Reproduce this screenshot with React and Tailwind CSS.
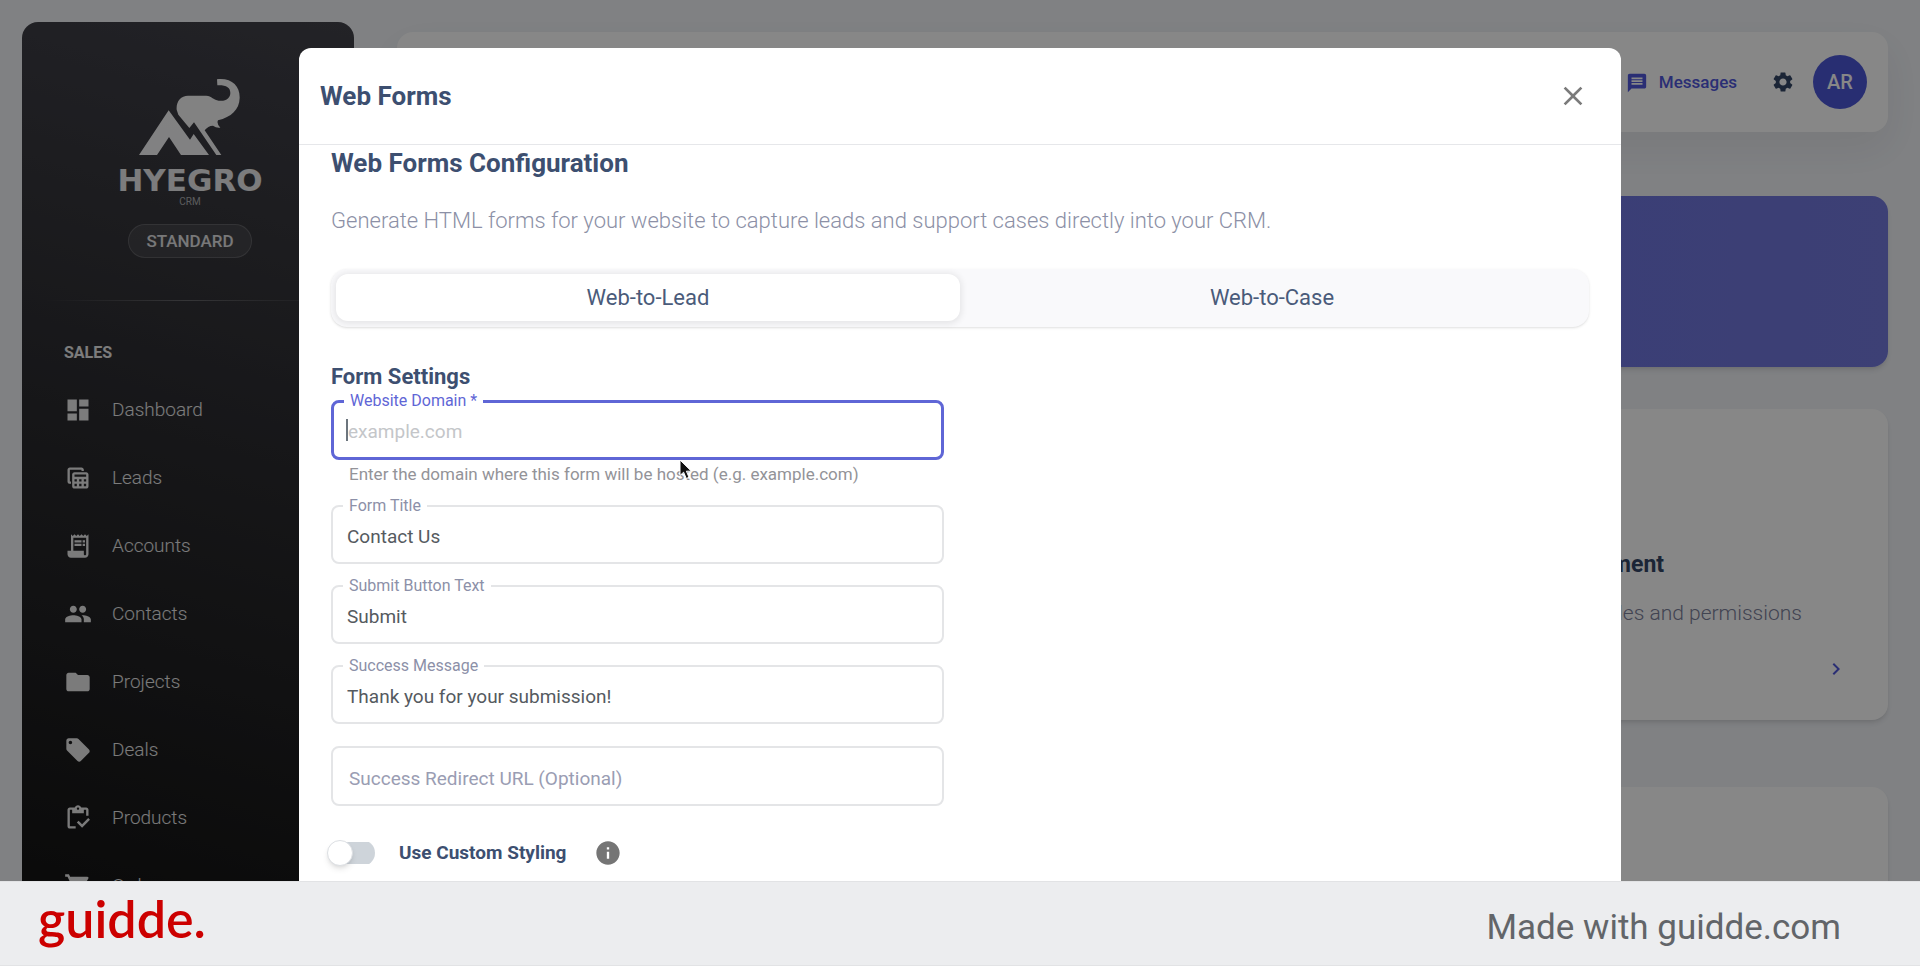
import { useState } from "react";
import {
  MdChevronRight,
  MdClose,
  MdDashboard,
  MdFolder,
  MdInfo,
  MdLocalOffer,
  MdMessage,
  MdPeople,
  MdReceiptLong,
  MdSettings,
  MdShoppingCart,
  MdTableView,
} from "react-icons/md";

const NAV = [
  { label: "Dashboard", icon: MdDashboard },
  { label: "Leads", icon: MdTableView },
  { label: "Accounts", icon: MdReceiptLong },
  { label: "Contacts", icon: MdPeople },
  { label: "Projects", icon: MdFolder },
  { label: "Deals", icon: MdLocalOffer },
  { label: "Products", icon: ClipboardCheck },
  { label: "Orders", icon: MdShoppingCart },
];

export default function App() {
  return (
    <div className="flex h-screen flex-col overflow-hidden font-['Roboto',sans-serif]">
      <div className="relative min-h-0 flex-1 overflow-hidden bg-[#f2f4f8]">
        <div className="flex h-full">
          <Sidebar />
          <Page />
        </div>
        <div className="absolute inset-0 flex justify-center bg-black/47 px-6 pt-12">
          <WebFormsDialog />
        </div>
      </div>
      <footer className="flex h-[85px] shrink-0 items-center justify-between border-y border-[#e2e3e5] bg-[#ecedef] pr-[79px] pl-[38px]">
        <a href="#guidde" className="pb-3 font-['Lato',sans-serif] text-[52px] leading-none font-semibold text-[#cc0000]">
          guidde.
        </a>
        <p className="pt-2 text-[35px] leading-10 text-[#626569]">Made with guidde.com</p>
      </footer>
    </div>
  );
}

function Sidebar() {
  return (
    <aside className="mt-[22px] ml-[22px] w-[332px] shrink-0 overflow-hidden rounded-t-2xl bg-linear-195 from-[#42424a] to-[#151515]">
      <div className="flex flex-col items-center pt-14 pl-1 text-white">
        <Logo />
        <div className="mt-2 font-['DejaVu_Sans',sans-serif] text-[31px] leading-8 font-bold text-white/90">HYEGRO</div>
        <div className="text-[10px] leading-3 text-white/60">CRM</div>
        <span className="mt-4 rounded-full border border-white/15 bg-white/8 px-[17px] py-1 text-[17px] leading-6 font-medium text-white/85">
          STANDARD
        </span>
      </div>
      <div className="mx-6 mt-[42px] h-px bg-linear-to-r from-transparent via-white/25 to-transparent" />
      <nav className="mt-10 px-[42px]">
        <h2 className="text-base leading-6 font-bold text-white/90">SALES</h2>
        <ul className="mt-[11px]">
          {NAV.map(({ label, icon: Icon }) => (
            <li key={label}>
              <a href={`#${label.toLowerCase()}`} className="flex h-[68px] items-center gap-5 text-[19px] font-light text-white/90">
                <Icon className="size-7" />
                {label}
              </a>
            </li>
          ))}
        </ul>
      </nav>
    </aside>
  );
}

function Logo() {
  return (
    <svg viewBox="420 235 312 234" className="h-[78px] w-[104px] opacity-95" fill="currentColor" aria-hidden="true">
      <path d="M423 466 512 332 576 420 587 403 633 466H549L513 412 477 466Z" />
      <path d="M536 330C534 305 548 289 570 288H625C640 289 648 301 662 303 685 306 697 294 697 280 697 264 685 256 658 257L657 239C700 234 726 258 725 295 724 330 700 352 660 362Q655 372 667 384 655 386 645 378 630 378 620 392L670 466H655L588 368 574 385 541 345Z" />
    </svg>
  );
}

function ClipboardCheck({ className }) {
  return (
    <svg viewBox="0 0 24 24" className={className} fill="currentColor" aria-hidden="true">
      <path d="M5 5h2v3h10V5h2v5h2V5c0-1.100-.900-2-2-2h-4.180C14.400 1.840 13.300 1 12 1s-2.400.840-2.820 2H5c-1.100 0-2 .900-2 2v14c0 1.100.900 2 2 2h5v-2H5V5zm7-2c.550 0 1 .450 1 1s-.450 1-1 1-1-.450-1-1 .450-1 1-1z" />
      <path d="M20.750 12 15.500 17.250 12.500 14.250 11 15.750l4.500 4.500 6.750-6.750z" />
    </svg>
  );
}

function Page() {
  return (
    <main className="ml-[43px] min-w-0 flex-1 pt-8 pr-8">
      <header className="flex h-[100px] items-center justify-end rounded-2xl bg-white pr-[21px] shadow-[0_16px_40px_4px_rgba(0,0,0,0.06)]">
        <button type="button" className="mt-0.5 flex items-center gap-[11px] text-[17px] font-medium text-[#5058dc]">
          <MdMessage className="size-[22px]" />
          Messages
        </button>
        <button type="button" aria-label="Settings" className="ml-[34px] text-[#344767]">
          <MdSettings className="size-6" />
        </button>
        <div className="ml-[18px] flex size-[54px] items-center justify-center rounded-full bg-[#4d58d8] text-xl font-medium text-white">
          AR
        </div>
      </header>
      <div className="mt-16 h-[171px] rounded-2xl bg-linear-to-r from-[#6068e8] to-[#7379dd] shadow-md" />
      <div className="mt-[42px] grid grid-cols-3 gap-x-[59px] gap-y-[67px]">
        <Card />
        <Card />
        <Card title="User Management" text="Manage user roles and permissions" />
        <Card />
        <Card />
        <Card />
      </div>
    </main>
  );
}

function Card({ title, text }) {
  return (
    <section className="flex h-[311px] flex-col rounded-2xl bg-white px-10 pt-[140px] shadow-md">
      {title && (
        <div className="flex flex-col pl-1">
          <h3 className="text-[23px] leading-8 font-bold whitespace-nowrap text-[#344767]">{title}</h3>
          <p className="mt-4 text-[21px] leading-8 font-light whitespace-nowrap text-[#7b809a]">{text}</p>
          <MdChevronRight className="mt-7 size-6 self-end text-[#5058dc]" />
        </div>
      )}
    </section>
  );
}

function WebFormsDialog() {
  const [tab, setTab] = useState("Web-to-Lead");
  return (
    <section role="dialog" aria-label="Web Forms" className="relative w-full max-w-[1322px] overflow-hidden rounded-t-xl bg-white text-[#3d4f70]">
      <header className="flex h-[97px] items-center justify-between border-b border-[#e6e7ea] pr-[32px] pl-[21px]">
        <h1 className="text-[26px] font-bold">Web Forms</h1>
        <button type="button" aria-label="Close" className="text-[#7b7b7b]">
          <MdClose className="size-8" />
        </button>
      </header>
      <div className="px-8">
        <h2 className="text-[26px] leading-9 font-bold">Web Forms Configuration</h2>
        <p className="mt-6 text-[22px] leading-8 font-light text-[#8c90a6]">
          Generate HTML forms for your website to capture leads and support cases directly into your CRM.
        </p>
        <div role="tablist" className="mt-8 grid h-[58px] grid-cols-2 rounded-2xl bg-[#f9f9fb] p-[5px] pb-[6px] shadow-sm">
          {["Web-to-Lead", "Web-to-Case"].map((name) => (
            <button
              key={name}
              type="button"
              role="tab"
              aria-selected={tab === name}
              onClick={() => setTab(name)}
              className={`rounded-xl text-[22px] text-[#4a5b7a] ${tab === name ? "bg-white shadow-[0_1px_6px_2px_rgba(0,0,0,0.08)]" : ""}`}
            >
              {name}
            </button>
          ))}
        </div>
        <h3 className="mt-[36px] text-[22px] leading-7 font-bold">Form Settings</h3>
        <form className="grid grid-cols-2 gap-[32px]">
          <div className="flex flex-col">
            <Field id="domain" label="Website Domain *" placeholder="example.com" focused />
            <p className="mt-0.5 mb-2.5 pl-[18px] text-[17px] leading-6 whitespace-nowrap text-[#939398]">
              Enter the domain where this form will be hosted (e.g. example.com)
            </p>
            <div className="flex flex-col gap-3">
              <Field id="title" label="Form Title" value="Contact Us" />
              <Field id="button" label="Submit Button Text" value="Submit" />
              <Field id="message" label="Success Message" value="Thank you for your submission!" />
            </div>
            <input
              aria-label="Success Redirect URL (Optional)"
              placeholder="Success Redirect URL (Optional)"
              className="mt-[22px] h-[60px] rounded-lg border-2 border-[#e4e5e7] px-4 pt-1 text-[19px] outline-none placeholder:text-[#9a9db3]"
            />
            <div className="mt-[33px] flex items-center">
              <label className="flex cursor-pointer items-center gap-6 text-[19px] leading-7 font-bold">
                <input type="checkbox" className="peer sr-only" />
                <span className="-ml-1 flex h-[26px] w-12 items-center rounded-full bg-[linear-gradient(#ced4da,#ced4da)] bg-[length:36px_22px] bg-right bg-no-repeat">
                  <span className="size-[26px] rounded-full border border-[#dcdfe3] bg-white shadow-md" />
                </span>
                Use Custom Styling
              </label>
              <MdInfo className="ml-7 size-7 text-[#757575]" />
            </div>
          </div>
        </form>
      </div>
      <Pointer />
    </section>
  );
}

function Field({ id, label, value, placeholder, focused }) {
  const tone = focused ? "border-[3px] border-[#5f66d6]" : "border-2 border-[#e4e5e7]";
  const text = focused ? "text-[#5f66d6]" : "text-[#8c90a8]";
  return (
    <fieldset className={`relative min-w-0 rounded-lg pr-4 pl-3 ${tone}`}>
      <legend className={`-ml-0.5 px-1.5 text-base leading-5 ${text}`}>
        <label htmlFor={id}>{label}</label>
      </legend>
      <input
        id={id}
        defaultValue={value}
        placeholder={placeholder}
        className="mb-1.5 block h-10 w-full pl-0.5 text-[19px] text-[#555a60] outline-none placeholder:text-[#c4c6c9]"
      />
      {/* text caret of the active field */}
      {focused && <span className="absolute top-2 left-3 h-[22px] w-0.5 bg-[#6c757d]" />}
    </fieldset>
  );
}

function Pointer() {
  return (
    <svg viewBox="0 0 14 21" className="absolute top-[411px] left-[380px] h-[21px] w-[14px]" aria-hidden="true">
      <path d="M1 1v15.500l3.600-3.300 2.700 6.300 2.700-1.200-2.600-6.100h5Z" fill="#111" stroke="#fff" strokeWidth="1" />
    </svg>
  );
}
